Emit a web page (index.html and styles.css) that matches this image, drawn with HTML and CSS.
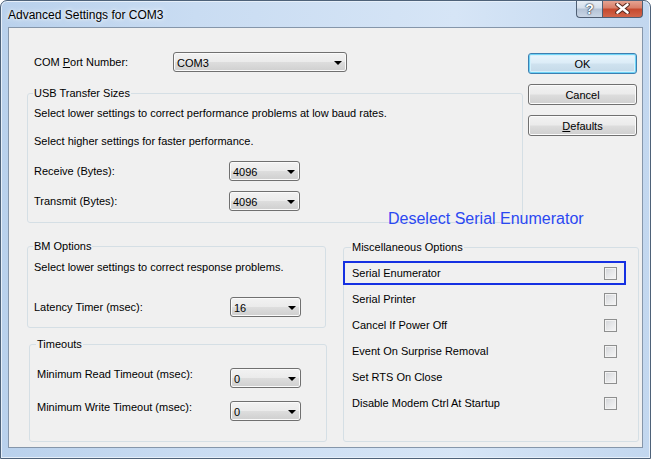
FILE: index.html
```html
<!DOCTYPE html>
<html lang="en">
<head>
    <meta charset="UTF-8">
    <title>Advanced Settings for COM3</title>
    <link rel="stylesheet" href="styles.css">
</head>
<body>
    <div class="window">
        <div class="titlebar">
            <span class="title">Advanced Settings for COM3</span>
            <div class="caption-buttons">
                <span class="cap-btn help">?</span>
                <span class="cap-btn close">
                    <svg width="15" height="11" viewBox="0 0 15 11">
                        <path d="M2.5 1.5 L12.5 9.5 M12.5 1.5 L2.5 9.5" stroke="#5a2a20" stroke-width="4.6" stroke-linecap="round"/>
                        <path d="M2.5 1.5 L12.5 9.5 M12.5 1.5 L2.5 9.5" stroke="#ffffff" stroke-width="2.6" stroke-linecap="round"/>
                    </svg>
                </span>
            </div>
        </div>

        <div class="client">
            <div class="top-band">
                <div class="left-col">
                    <div class="field port-row">
                        <span class="label">COM <u>P</u>ort Number:</span>
                        <div class="combo wide"><span>COM3</span><i class="arrow"></i></div>
                    </div>

                    <fieldset class="group usb">
                        <legend>USB Transfer Sizes</legend>
                        <p class="first">Select lower settings to correct performance problems at low baud rates.</p>
                        <p class="second">Select higher settings for faster performance.</p>
                        <div class="field receive">
                            <span class="label">Receive (Bytes):</span>
                            <div class="combo"><span>4096</span><i class="arrow"></i></div>
                        </div>
                        <div class="field transmit">
                            <span class="label">Transmit (Bytes):</span>
                            <div class="combo"><span>4096</span><i class="arrow"></i></div>
                        </div>
                    </fieldset>
                </div>

                <div class="buttons">
                    <button class="btn default">OK</button>
                    <button class="btn">Cancel</button>
                    <button class="btn"><u>D</u>efaults</button>
                </div>
            </div>

            <div class="bottom-band">
                <div class="left-col narrow">
                    <fieldset class="group bm">
                        <legend>BM Options</legend>
                        <p class="first">Select lower settings to correct response problems.</p>
                        <div class="field latency">
                            <span class="label">Latency Timer (msec):</span>
                            <div class="combo"><span>16</span><i class="arrow"></i></div>
                        </div>
                    </fieldset>

                    <fieldset class="group timeouts">
                        <legend>Timeouts</legend>
                        <div class="field top read">
                            <span class="label">Minimum Read Timeout (msec):</span>
                            <div class="combo"><span>0</span><i class="arrow"></i></div>
                        </div>
                        <div class="field top write">
                            <span class="label">Minimum Write Timeout (msec):</span>
                            <div class="combo"><span>0</span><i class="arrow"></i></div>
                        </div>
                    </fieldset>
                </div>

                <fieldset class="group misc">
                    <legend>Miscellaneous Options</legend>
                    <div class="option marked"><span>Serial Enumerator</span><i class="check"></i></div>
                    <div class="option"><span>Serial Printer</span><i class="check"></i></div>
                    <div class="option"><span>Cancel If Power Off</span><i class="check"></i></div>
                    <div class="option"><span>Event On Surprise Removal</span><i class="check"></i></div>
                    <div class="option"><span>Set RTS On Close</span><i class="check"></i></div>
                    <div class="option"><span>Disable Modem Ctrl At Startup</span><i class="check"></i></div>
                </fieldset>
            </div>

            <div class="note">Deselect Serial Enumerator</div>
        </div>
    </div>
</body>
</html>
```

FILE: styles.css
```css
* {
    box-sizing: border-box;
}
body {
    margin: 0;
    font-family: "Liberation Sans", Arial, sans-serif;
    font-size: 11px;
    color: #000;
    background: #fff;
}
.window {
    width: 651px;
    height: 459px;
    border: 1px solid #4e6279;
    border-radius: 7px 7px 0 0;
    background: linear-gradient(to right, #b9d1ec 0%, #c9dcf2 30%, #d6e5f6 70%, #c2d7ef 100%);
    box-shadow: inset 0 0 0 1px #e6eff9;
    display: flex;
    flex-direction: column;
    overflow: hidden;
}
.titlebar {
    height: 26px;
    display: flex;
    justify-content: space-between;
    align-items: flex-start;
    padding: 0 7px;
}
.title {
    font-size: 12px;
    line-height: 26px;
    padding-top: 1px;
    color: #000;
    text-shadow: 0 0 6px #f4f8fc, 0 0 3px #f4f8fc;
}
.caption-buttons {
    display: flex;
    margin-top: -1px;
}
.cap-btn {
    height: 18px;
    border: 1px solid #4f5f74;
    border-top: none;
    display: flex;
    align-items: center;
    justify-content: center;
}
.help {
    width: 26px;
    border-right: none;
    border-radius: 0 0 0 4px;
    background: linear-gradient(#e9eff6 0%, #d6e0ec 45%, #b4c3d6 55%, #c9d6e6 100%);
    color: #fff;
    font-weight: bold;
    font-size: 14px;
    text-shadow: 0 0 1px #2d3a4a, 0 0 1px #2d3a4a, 0 0 2px #2d3a4a;
}
.close {
    width: 41px;
    border-radius: 0 0 4px 0;
    background: linear-gradient(#e7a897 0%, #d9806a 45%, #c64a2f 55%, #d2654a 100%);
}

.client {
    flex: 1;
    margin: 0 7px 10px;
    border: 1px solid #8596aa;
    background: #f0f0f0;
    position: relative;
    padding-left: 18px;
}

.top-band {
    display: flex;
    gap: 5px;
}
.left-col {
    width: 496px;
}
.buttons {
    padding-top: 25px;
}
.btn {
    display: block;
    width: 109px;
    height: 21px;
    margin-bottom: 10px;
    padding: 0;
    font: inherit;
    color: #000;
    border: 1px solid #707070;
    border-radius: 3px;
    background: linear-gradient(#f2f2f2 0%, #ebebeb 48%, #dddddd 52%, #cfcfcf 100%);
    box-shadow: inset 0 0 0 1px #fbfbfb;
}
.btn.default {
    border-color: #3c7fb1;
    background: linear-gradient(#eaf6fd 0%, #dcecf7 48%, #cfe2ef 52%, #c4d9e8 100%);
    box-shadow: inset 0 0 0 1px #6fd3f6, inset 0 0 0 2px #d6f0fb;
}

.field {
    display: flex;
    align-items: center;
    height: 20px;
}
.field.top {
    align-items: flex-start;
}
.field .label {
    line-height: 13px;
}
.port-row {
    margin-top: 24px;
    padding-left: 7px;
}
.port-row .label {
    width: 139px;
}
.combo {
    width: 71px;
    height: 20px;
    border: 1px solid #707070;
    border-radius: 3px;
    background: linear-gradient(#f2f2f2 0%, #ebebeb 48%, #dddddd 52%, #cfcfcf 100%);
    box-shadow: inset 0 0 0 1px #fafafa;
    display: flex;
    align-items: center;
    justify-content: space-between;
    padding: 1px 4px 0 3px;
}
.combo.wide {
    width: 174px;
}
.arrow {
    width: 0;
    height: 0;
    border-left: 4px solid transparent;
    border-right: 4px solid transparent;
    border-top: 4px solid #000;
}

.group {
    margin: 0;
    border: 1px solid #d5dfe5;
    border-radius: 3px;
    padding: 0 6px;
    min-width: 0;
}
.group legend {
    padding: 0 1px;
    margin-left: -1px;
    line-height: 13px;
}
.group p {
    margin: 0;
    line-height: 13px;
}

.usb {
    margin-top: 15px;
    padding-bottom: 11px;
}
.usb .first {
    margin-top: 7px;
}
.usb .second {
    margin-top: 15px;
}
.usb .label {
    width: 195px;
}
.usb .receive {
    margin-top: 13px;
}
.usb .transmit {
    margin-top: 10px;
}

.bottom-band {
    display: flex;
    align-items: flex-start;
    margin-top: 17px;
}
.left-col.narrow {
    width: 300px;
}
.bm {
    width: 299px;
    padding-bottom: 10px;
}
.bm .first {
    margin-top: 8px;
}
.bm .label {
    width: 196px;
}
.bm .latency {
    margin-top: 23px;
}
.timeouts {
    width: 298px;
    margin: 10px 0 0 2px;
    padding: 0 7px 20px;
}
.timeouts .label {
    width: 193px;
}
.timeouts .read {
    margin-top: 17px;
}
.timeouts .write {
    margin-top: 13px;
}

.misc {
    width: 296px;
    margin: 1px 0 0 16px;
    padding: 6px 21px 25px 8px;
}
.option {
    height: 26px;
    display: flex;
    align-items: center;
    justify-content: space-between;
}
.option.marked {
    height: 24px;
    margin: 1px -9px;
    padding: 0 7px;
    border: 2px solid #1530e2;
}
.check {
    width: 13px;
    height: 13px;
    border: 1px solid #8e8f8f;
    background: linear-gradient(135deg, #d2d4d8 0%, #e6e7e9 50%, #f6f6f6 100%);
    box-shadow: inset 0 0 0 1px #f3f3f3;
}

.note {
    position: absolute;
    left: 379px;
    top: 181px;
    font-size: 16px;
    line-height: 19px;
    color: #2b48f2;
}
```
